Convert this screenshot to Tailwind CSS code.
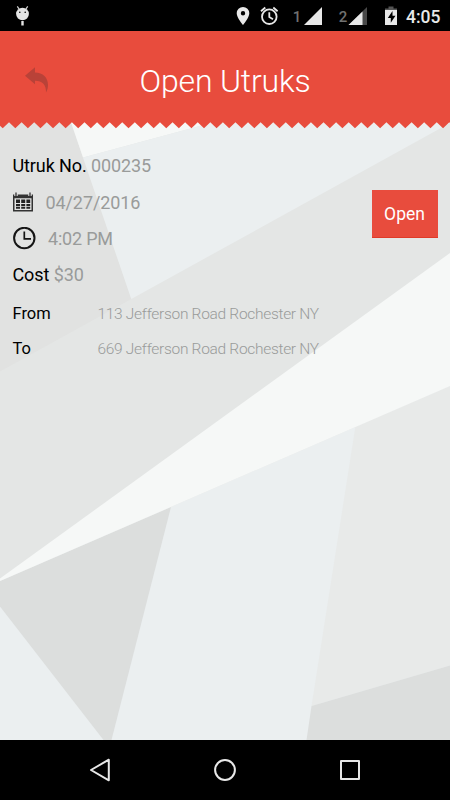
<!DOCTYPE html>
<html lang="en">
<head>
<meta charset="utf-8">
<title>Open Utruks</title>
<script src="https://cdn.jsdelivr.net/npm/@tailwindcss/browser@4"></script>
</head>
<body class="w-[450px] h-[800px] overflow-hidden bg-black font-['Roboto',sans-serif] flex flex-col">
  <!-- Status bar -->
  <div class="h-[31px] shrink-0 bg-black flex items-center justify-between">
    <svg class="w-[40px] h-[31px]" viewBox="0 0 40 31">
      <g fill="#e4e4e4"><ellipse cx="22.5" cy="14" rx="6.4" ry="6.2"/><rect x="21.3" y="21" width="2.4" height="4.5"/></g>
      <path d="M17.3 6.3l2 3M27.7 6.3l-2 3" stroke="#d0d0d0" stroke-width="1.2"/>
      <circle cx="19.8" cy="12.2" r=".8"/><circle cx="25.2" cy="12.2" r=".8"/>
    </svg>
    <div class="flex items-center h-[31px]">
      <svg class="w-[65px] h-[31px]" viewBox="225 0 65 31">
        <path fill="#e8e8e8" fill-rule="evenodd" d="M243 7a6.300 6.300 0 0 0-6.300 6.300c0 4.700 6.300 11.700 6.300 11.700s6.300-7 6.300-11.700A6.300 6.300 0 0 0 243 7zm0 4.100a2.200 2.200 0 1 1 0 4.400 2.200 2.200 0 0 1 0-4.400z"/>
        <g fill="none" stroke="#e8e8e8" stroke-width="1.800"><circle cx="269.300" cy="16.700" r="7.300"/><path d="M269.300 12.200v4.900l3.700 2.200M261 11.200l4.300-3.700M277.600 11.200l-4.300-3.700"/></g>
      </svg>
      <span class="w-[14px] text-center text-[15px] leading-[31px] font-medium text-[#707070] pt-[3px]">1</span>
      <svg class="w-[34px] h-[31px]" viewBox="304 0 34 31"><path fill="#e8e8e8" d="M304 25L322 7v18z"/></svg>
      <span class="w-[10px] text-center text-[15px] leading-[31px] font-medium text-[#707070] pt-[3px]">2</span>
      <svg class="w-[57px] h-[31px]" viewBox="348 0 57 31">
        <path fill="#484848" d="M348.500 25L367 7v18z"/><path fill="#e8e8e8" d="M348.500 25L362.500 11.400V25z"/>
        <path fill="#555" d="M388.500 6.500h5V8.500h3.500v2H385v-2h3.500z"/><path fill="#e8e8e8" d="M385 10h12v15h-12z"/>
        <path fill="#000" d="M392.500 11l-4.700 7h3v4.800l4.700-7h-3z"/>
      </svg>
      <span class="w-[45px] pl-[1px] text-[17.500px] leading-[31px] font-medium text-[#e8e8e8] pt-[3px]">4:05</span>
    </div>
  </div>

  <div class="relative h-[709px] shrink-0 flex flex-col">
    <!-- Faceted backdrop -->
    <svg class="absolute inset-0 w-[450px] h-[709px]" viewBox="0 31 450 709">
      <path fill="#e4e6e5" d="M0 31h450v709H0z"/>
      <path fill="#e1e2e1" d="M0 120h70.200L131.300 299 0 371.500z"/>
      <path fill="#f6f8f7" d="M70.200 120H220L197 126.700 83 157.500z"/>
      <path fill="#ebeff0" d="M83 157.500L197 126.700 220 120h235.500L131.300 299z"/>
      <path fill="#ebeff0" d="M0 581L450 386V740H0z"/>
      <path fill="#dcdedd" d="M0 581L171 507 111.500 740h-8L0 606.500z"/>
      <path fill="#e8eae9" d="M355.300 427L450 386V665.500L311.500 706z"/>
      <path fill="#dcdedd" d="M311.500 706L450 665.500V740H306.500z"/>
      <path fill="#f6f8f7" d="M0 578.500L450 253V386L0 581z"/>
    </svg>

    <!-- Header -->
    <header class="relative h-[98px] shrink-0">
      <svg class="absolute inset-0 w-[450px] h-[98px]" viewBox="0 0 450 98">
        <path fill="#e84c3d" d="M-9.850 0V97.300l6.290-6l6.290 6l6.290-6l6.290 6l6.290-6l6.290 6l6.290-6l6.290 6l6.290-6l6.290 6l6.290-6l6.290 6l6.290-6l6.290 6l6.290-6l6.290 6l6.290-6l6.290 6l6.290-6l6.290 6l6.290-6l6.290 6l6.290-6l6.290 6l6.290-6l6.290 6l6.290-6l6.290 6l6.290-6l6.290 6l6.290-6l6.290 6l6.290-6l6.290 6l6.290-6l6.290 6l6.290-6l6.290 6l6.290-6l6.290 6l6.290-6l6.290 6l6.290-6l6.290 6l6.290-6l6.290 6l6.290-6l6.290 6l6.290-6l6.290 6l6.290-6l6.290 6l6.290-6l6.290 6l6.290-6l6.290 6l6.290-6l6.290 6l6.290-6l6.290 6l6.290-6l6.290 6l6.290-6l6.290 6l6.290-6l6.290 6l6.290-6l6.290 6l6.290-6l6.290 6l6.290-6l6.290 6l6.290-6l6.290 6V0z"/>
        <path fill="#b94238" d="M25 44.800L35 36.200v5.300c8 .300 13 5 13 12.500 0 2.600-.700 5.300-2 7.500 .300-7.500-3.500-11.700-11-11.800v3.500z"/>
      </svg>
      <h1 class="relative text-center text-[32px] tracking-[-0.180px] leading-[98px] font-light text-white pt-[1px]">Open Utruks</h1>
    </header>

    <!-- Order details -->
    <main class="relative flex justify-between pl-[12.500px] pr-[12.500px] text-[18px] tracking-[-0.100px] text-[#999b9a]">
      <div class="flex flex-col pt-[19px]">
        <div class="h-9 leading-[36px]"><span class="text-black">Utruk No.</span> 000235</div>
        <div class="h-9 flex items-center">
          <svg class="w-[20px] h-[20px] mr-[13px]" viewBox="0 0 20 20">
            <path fill="#333" fill-rule="evenodd" d="M0 2.500h20V19.500H0zM1.500 6.300v11.700h17V6.300z"/>
            <path fill="#e1e2e1" d="M1.300 0h3.400v4H1.300zM15.300 0h3.400v4h-3.400z"/>
            <path stroke="#333" stroke-width="1.300" d="M3 .500v4M17 .500v4"/>
            <path fill="#222" d="M3 7.500h4v3.500H3zM8.200 7.500h4v3.500h-4zM13.400 7.500h3.800v3.500h-3.800zM3 12h4v2H3zM8.200 12h4v2h-4zM13.400 12h3.800v2h-3.800zM3 14.800h4v1.900H3zM8.200 14.800h4v1.900h-4zM13.400 14.800h3.800v1.900h-3.800z"/>
          </svg>
          <span>04/27/2016</span>
        </div>
        <div class="h-9 flex items-center">
          <svg class="w-[23px] h-[23px] mr-[12.500px]" viewBox="0 0 23 23" fill="none" stroke="#151515"><circle cx="11.300" cy="11" r="10.200" stroke-width="2"/><path stroke-width="1.700" d="M11.300 4.500v7.300h6.700"/></svg>
          <span class="tracking-[-0.200px]">4:02 PM</span>
        </div>
        <div class="h-9 leading-[38px]"><span class="text-black">Cost</span> $30</div>
        <div class="grid grid-cols-[85px_auto] mt-[4px] text-[15.500px]">
          <span class="h-[35px] leading-[35px] text-black text-[16.500px] tracking-normal">From</span><span class="leading-[36px] h-[35px] font-light tracking-[-0.300px]">113 Jefferson Road Rochester NY</span>
          <span class="h-[35px] leading-[35px] text-black text-[16.500px] tracking-normal">To</span><span class="leading-[36px] h-[35px] font-light tracking-[-0.300px]">669 Jefferson Road Rochester NY</span>
        </div>
      </div>
      <button class="mt-[60.500px] w-[66px] h-[48.500px] bg-[#e84c3d] text-white text-[17.500px] tracking-normal border-b border-[#e03a28] pt-[2px]">Open</button>
    </main>
  </div>

  <!-- Navigation bar -->
  <nav class="h-[60px] shrink-0 bg-black flex items-center justify-between px-[88px]">
    <svg class="w-[24px] h-[24px]" viewBox="0 0 24 24" fill="none" stroke="#e8e8e8" stroke-width="2" stroke-linejoin="round"><path d="M20.800 1.700v20.600L3 12z"/></svg>
    <svg class="w-[24px] h-[24px]" viewBox="0 0 24 24" fill="none" stroke="#e8e8e8" stroke-width="2"><circle cx="12" cy="12" r="9.900"/></svg>
    <svg class="w-[24px] h-[24px]" viewBox="0 0 24 24" fill="none" stroke="#e8e8e8" stroke-width="2" stroke-linejoin="round"><path d="M3 3h18v18H3z"/></svg>
  </nav>
</body>
</html>
